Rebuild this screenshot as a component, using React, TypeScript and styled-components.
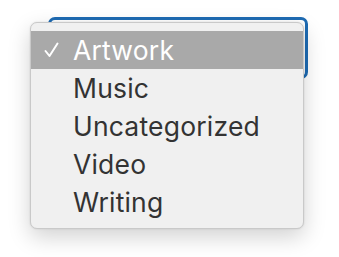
import styled, { createGlobalStyle } from 'styled-components'

const GlobalStyle = createGlobalStyle`
  html, body {
    margin: 0;
    padding: 0;
    background: #ffffff;
  }
  body {
    font-family: Inter, "Noto Sans", "Liberation Sans", sans-serif;
  }
`

const Stage = styled.div`
  position: relative;
  width: 339px;
  height: 257px;
  padding: 17px 0 0 48px;
  box-sizing: border-box;
`

const SelectBox = styled.div`
  width: 260px;
  height: 62px;
  box-sizing: border-box;
  border: 3px solid #1e6bb3;
  border-radius: 7px;
  background: #ffffff;
`

const Menu = styled.ul`
  position: absolute;
  left: 30px;
  top: 22px;
  width: 274px;
  margin: 0;
  padding: 8px 0 7px;
  list-style: none;
  box-sizing: border-box;
  background: #f0f0f0;
  border: 1px solid #c9c9c9;
  border-radius: 7px;
  box-shadow: 0 8px 22px rgba(0, 0, 0, 0.18), 0 0 2px rgba(0, 0, 0, 0.12);
`

const Option = styled.li<{ $selected?: boolean }>`
  display: flex;
  align-items: center;
  height: 38px;
  padding-left: 13px;
  font-size: 26.5px;
  letter-spacing: 0.2px;
  color: ${p => (p.$selected ? '#ffffff' : '#333333')};
  background: ${p => (p.$selected ? '#a9a9a9' : 'transparent')};
`

const Check = styled.span`
  display: flex;
  width: 29px;
  justify-content: flex-start;
`

const options = ['Artwork', 'Music', 'Uncategorized', 'Video', 'Writing']

export default function App() {
  const selected = 'Artwork'
  return (
    <>
      <GlobalStyle />
      <Stage>
        <SelectBox />
        <Menu>
          {options.map(o => (
            <Option key={o} $selected={o === selected}>
              <Check>
                {o === selected && (
                  <svg width="15" height="16" viewBox="0 0 15 16">
                    <polyline
                      points="1.5,9 5.5,14 13.5,1.5"
                      fill="none"
                      stroke="#ffffff"
                      strokeWidth="2"
                      strokeLinecap="round"
                      strokeLinejoin="round"
                    />
                  </svg>
                )}
              </Check>
              {o}
            </Option>
          ))}
        </Menu>
      </Stage>
    </>
  )
}
